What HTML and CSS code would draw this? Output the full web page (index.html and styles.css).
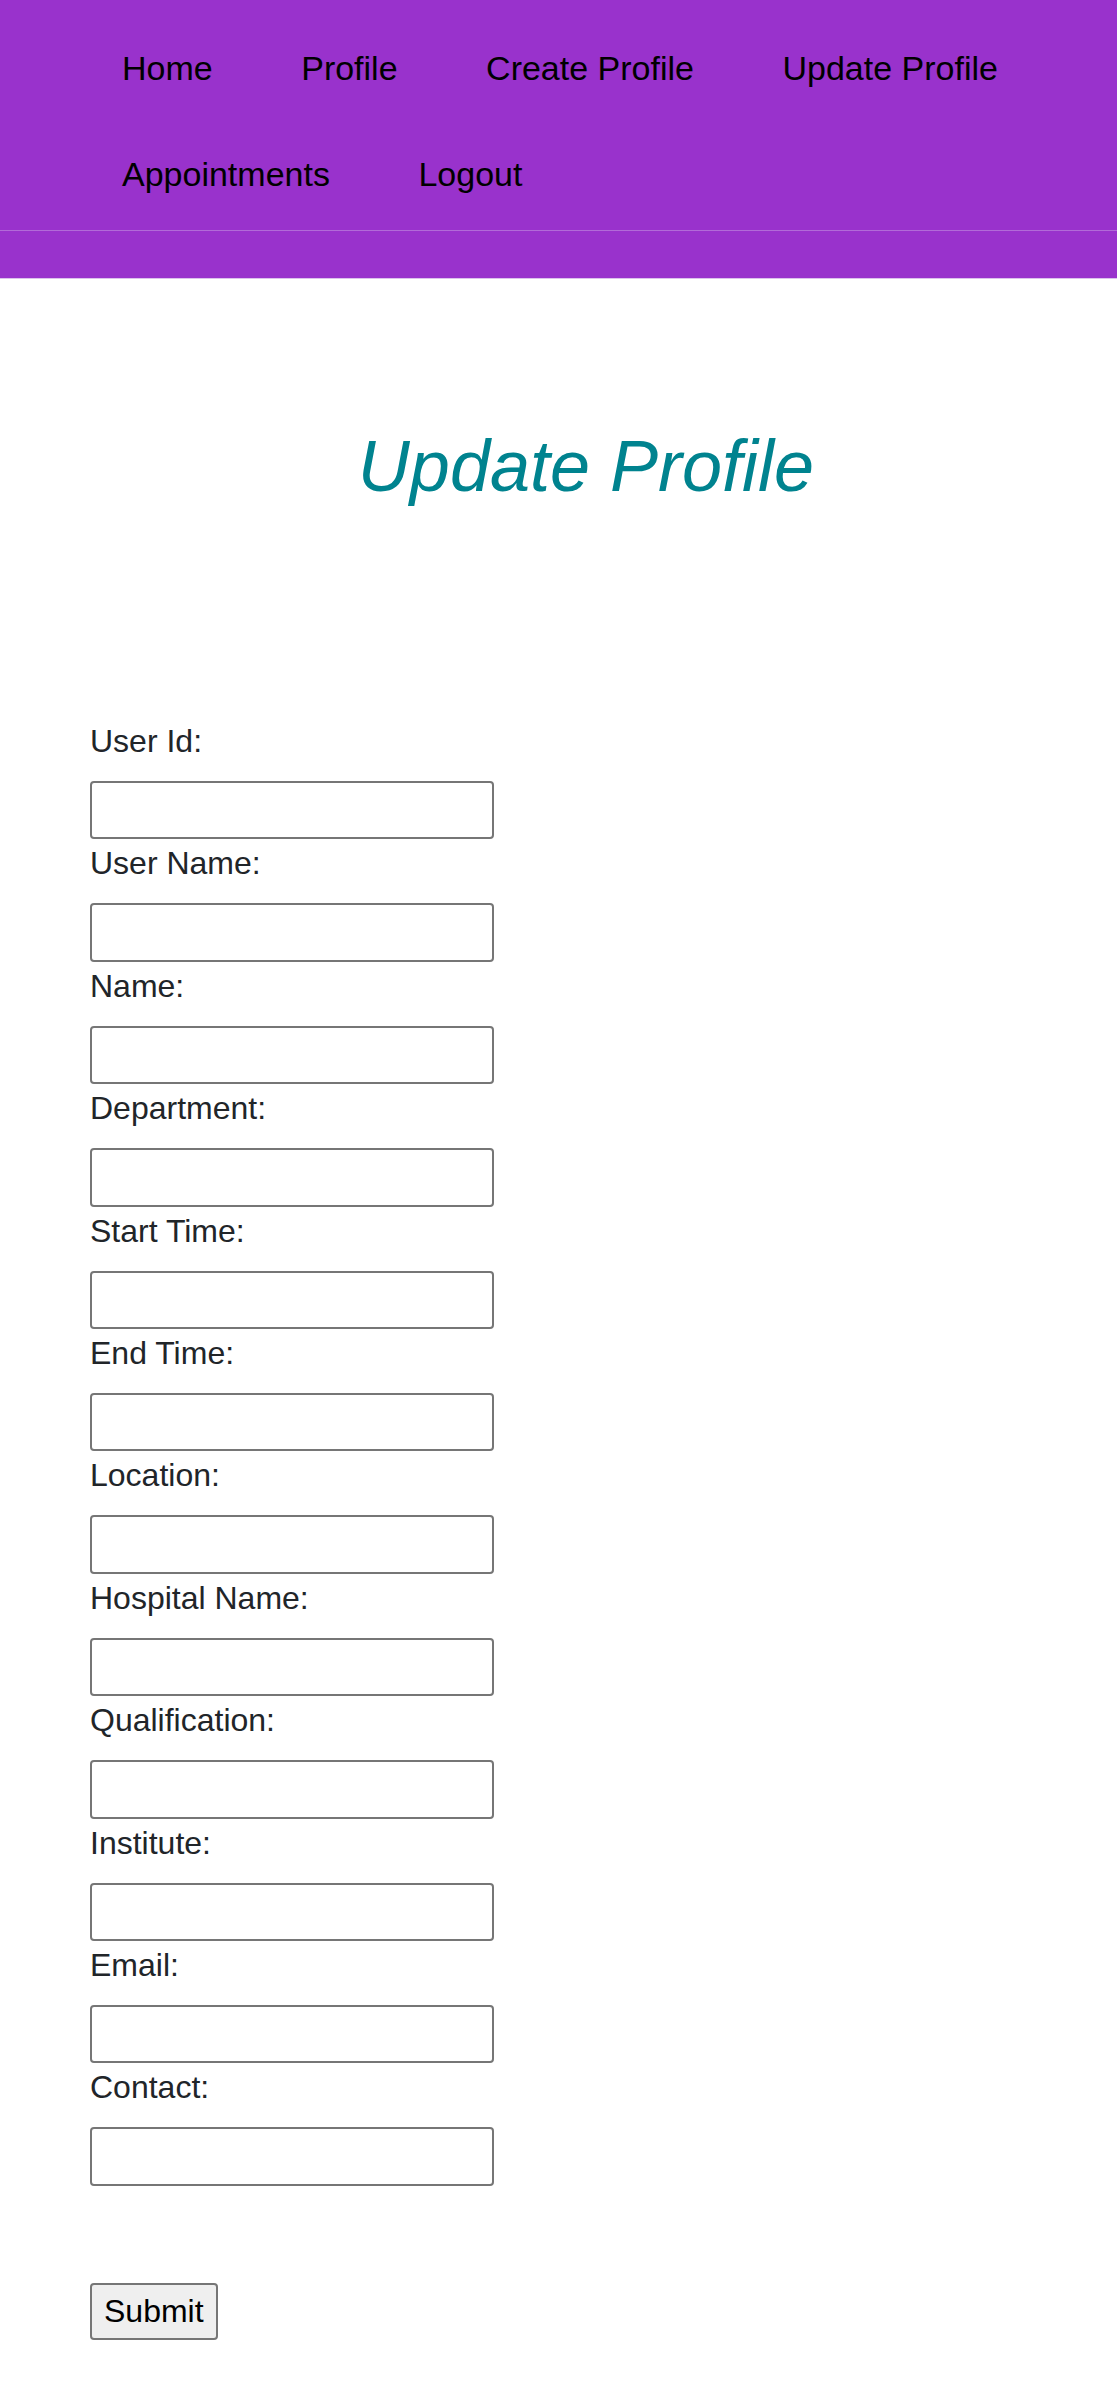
FILE: index.html
```html
<!DOCTYPE html>
<html lang="en">
<head>
<meta charset="utf-8">
<title>Update Profile</title>
<link rel="stylesheet" href="styles.css">
</head>
<body>
<header class="topbar">
  <nav class="menu">
    <a class="menu-link" href="#">Home</a>
    <a class="menu-link" href="#">Profile</a>
    <a class="menu-link" href="#">Create Profile</a>
    <a class="menu-link" href="#">Update Profile</a>
    <a class="menu-link" href="#">Appointments</a>
    <a class="menu-link" href="#">Logout</a>
  </nav>
  <div class="topbar-foot"></div>
</header>
<main class="page">
  <h1 class="title">Update Profile</h1>
  <form class="profile-form">
    <label class="field-label" for="f-uid">User Id:</label>
    <input class="field-input" id="f-uid" type="text">
    <label class="field-label" for="f-uname">User Name:</label>
    <input class="field-input" id="f-uname" type="text">
    <label class="field-label" for="f-name">Name:</label>
    <input class="field-input" id="f-name" type="text">
    <label class="field-label" for="f-dept">Department:</label>
    <input class="field-input" id="f-dept" type="text">
    <label class="field-label" for="f-start">Start Time:</label>
    <input class="field-input" id="f-start" type="text">
    <label class="field-label" for="f-end">End Time:</label>
    <input class="field-input" id="f-end" type="text">
    <label class="field-label" for="f-loc">Location:</label>
    <input class="field-input" id="f-loc" type="text">
    <label class="field-label" for="f-hosp">Hospital Name:</label>
    <input class="field-input" id="f-hosp" type="text">
    <label class="field-label" for="f-qual">Qualification:</label>
    <input class="field-input" id="f-qual" type="text">
    <label class="field-label" for="f-inst">Institute:</label>
    <input class="field-input" id="f-inst" type="text">
    <label class="field-label" for="f-email">Email:</label>
    <input class="field-input" id="f-email" type="text">
    <label class="field-label" for="f-contact">Contact:</label>
    <input class="field-input" id="f-contact" type="text">
    <button class="submit-btn" type="submit">Submit</button>
  </form>
</main>
</body>
</html>
```

FILE: styles.css
```css
html, body {
  margin: 0;
  padding: 0;
  background: #ffffff;
}

body {
  font-family: "Liberation Sans", Arial, sans-serif;
  color: #212529;
}

.topbar {
  background: #9932cc;
  border-bottom: 1px solid #dcc2ec;
}

.menu {
  display: flex;
  flex-wrap: wrap;
  column-gap: 88.5px;
  padding: 15px 32px 3px 122px;
  border-bottom: 1px solid #b26ad8;
}

.menu-link {
  display: block;
  padding: 34px 0;
  font-size: 34px;
  line-height: 38px;
  color: #000000;
  text-decoration: none;
}

.topbar-foot {
  height: 47px;
}

.page {
  padding: 0;
}

.title {
  margin: 144px 0 207.6px 0;
  padding-left: 55px;
  text-align: center;
  font-size: 72px;
  line-height: 86.4px;
  font-style: italic;
  font-weight: normal;
  color: #00838f;
}

.profile-form {
  display: flex;
  flex-direction: column;
  align-items: flex-start;
  padding-left: 90px;
}

.field-label {
  display: block;
  font-size: 32px;
  line-height: 48px;
  margin-bottom: 16px;
  color: #212529;
}

.field-input {
  display: block;
  box-sizing: border-box;
  width: 404px;
  height: 58.4px;
  margin: 0;
  padding: 0 6px;
  border: 2px solid #767676;
  border-radius: 4px;
  background: #ffffff;
  font-family: "Liberation Sans", Arial, sans-serif;
  font-size: 26px;
}

.submit-btn {
  margin-top: 97px;
  box-sizing: border-box;
  height: 57px;
  padding: 0 12px;
  border: 2px solid #767676;
  border-radius: 4px;
  background: #efefef;
  font-family: "Liberation Sans", Arial, sans-serif;
  font-size: 32px;
  line-height: 1;
  color: #000000;
}
```
